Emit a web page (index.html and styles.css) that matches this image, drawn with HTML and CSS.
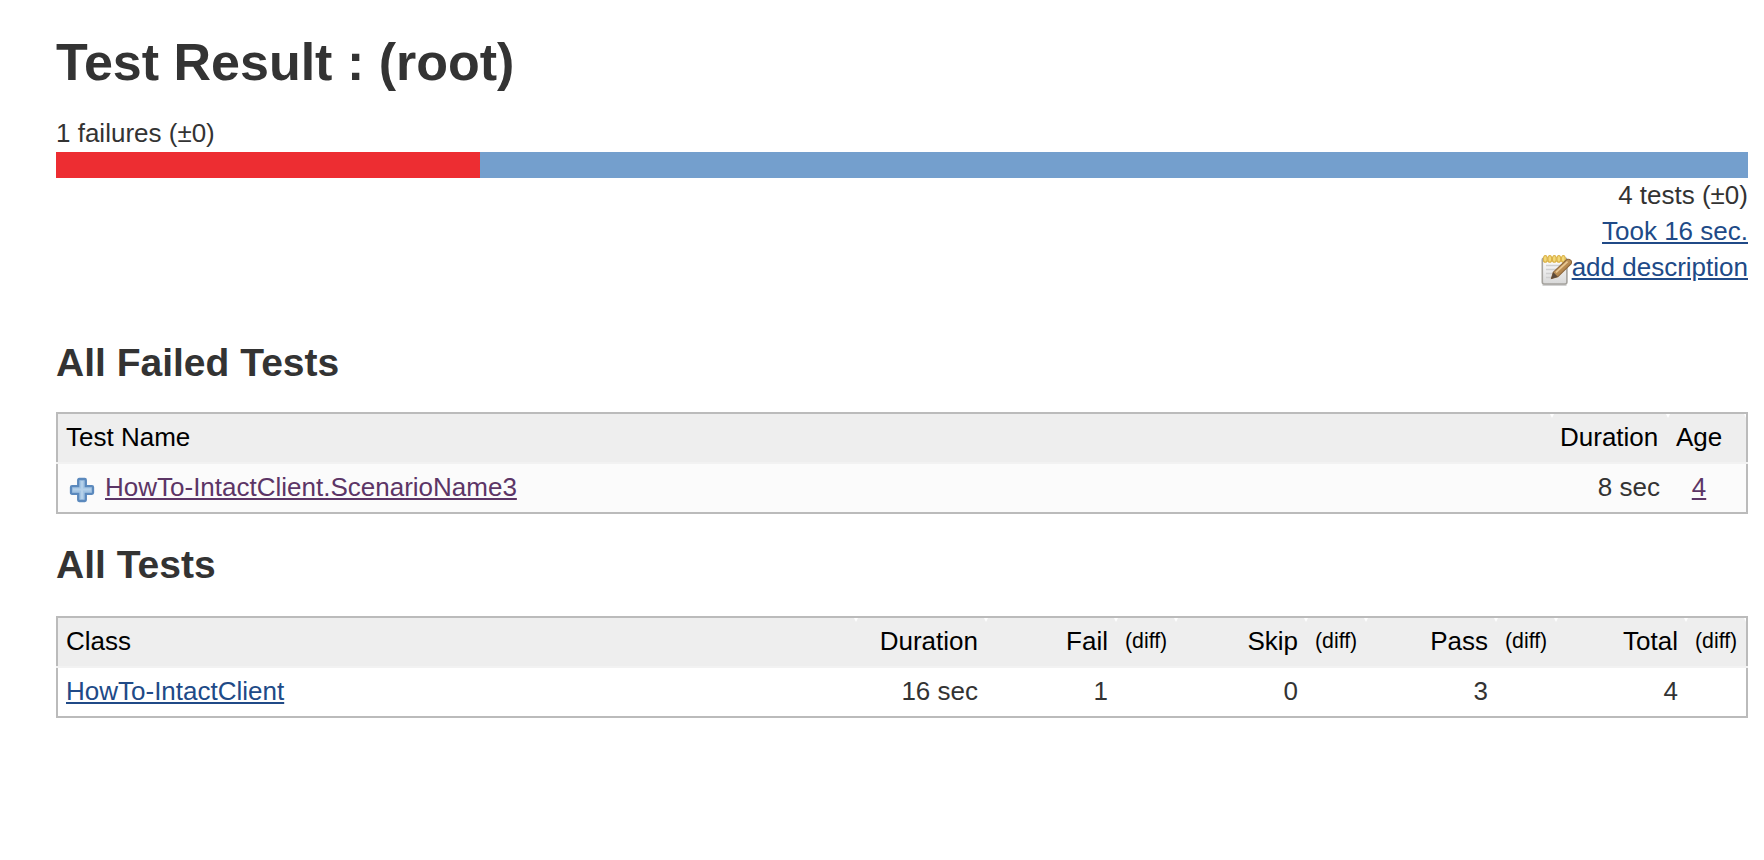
FILE: index.html
```html
<!DOCTYPE html>
<html lang="en">
<head>
<meta charset="utf-8">
<title>Test Result : (root)</title>
<link rel="stylesheet" href="styles.css">
</head>
<body>
<main class="page">
  <h1 class="title">Test Result : (root)</h1>
  <div class="failures">1 failures (±0)</div>
  <div class="bar"><div class="bar-failed"></div></div>
  <div class="summary">
    <div>4 tests (±0)</div>
    <div><a href="#">Took 16 sec.</a></div>
    <div class="describe">
      <svg class="notepad" viewBox="0 0 32 32" aria-hidden="true">
        <defs>
          <linearGradient id="paper" x1="0" y1="0" x2="0" y2="1"><stop offset="0" stop-color="#fff"/><stop offset="1" stop-color="#d8d8d8"/></linearGradient>
          <linearGradient id="wood" x1="0" y1="0" x2="1" y2="1"><stop offset="0" stop-color="#dcb478"/><stop offset="1" stop-color="#97662f"/></linearGradient>
        </defs>
        <path d="M2.5 31h24" stroke="#b5b5b5" stroke-width="1.2"/>
        <rect x="2.3" y="4" width="24.6" height="26" rx="2" fill="url(#paper)" stroke="#a5a39e" stroke-width="1.6"/>
        <path d="M6 11.5h16M6 15.5h13M6 19.5h9M6 23.5h6" stroke="#cfcfcf" stroke-width="1.3"/>
        <path d="M3 3.8h23v4.2H3z" fill="#ecd27a"/>
        <g fill="#f3d978" stroke="#dbb24a" stroke-width="1.1"><ellipse cx="5.3" cy="4.9" rx="1.9" ry="3.4"/><ellipse cx="9.8" cy="4.9" rx="1.9" ry="3.4"/><ellipse cx="14.3" cy="4.9" rx="1.9" ry="3.4"/><ellipse cx="18.8" cy="4.9" rx="1.9" ry="3.4"/><ellipse cx="23.3" cy="4.9" rx="1.9" ry="3.4"/></g>
        <path d="M11.5 24.5l1.8-6.3L26.5 5.8q2.2-1.2 4 .4t.5 3.7L17.8 22.8z" fill="url(#wood)" stroke="#8d673d" stroke-width="1.1"/>
        <path d="M11 25l2.3-6.8 4.5 4.6z" fill="#5d4b3b"/>
        <path d="M16 18.3L27.5 7.6" stroke="#e9c894" stroke-width="1.6"/>
      </svg><a href="#">add description</a>
    </div>
  </div>

  <h2 class="heading heading-failed">All Failed Tests</h2>
  <section class="grid">
    <div class="row row-head cols-failed">
      <div>Test Name</div><div class="num duration-head">Duration</div><div>Age</div>
    </div>
    <div class="row row-body shaded cols-failed">
      <div class="test">
        <svg class="plus" viewBox="0 0 26 26" aria-hidden="true">
          <path d="M10.2 2h5.6q1 0 1 1v6.2H23q1 0 1 1v5.6q0 1-1 1h-6.2V23q0 1-1 1h-5.6q-1 0-1-1v-6.2H3q-1 0-1-1v-5.6q0-1 1-1h6.2V3q0-1 1-1z" fill="#a3c4e3" stroke="#5b89bd" stroke-width="2.3"/>
          <path d="M13 4v18M4 12.5h18" stroke="#b4d0e9" stroke-width="2"/>
        </svg><a class="visited" href="#">HowTo-IntactClient.ScenarioName3</a>
      </div>
      <div class="num">8 sec</div><div class="age"><a class="visited" href="#">4</a></div>
    </div>
  </section>

  <h2 class="heading heading-all">All Tests</h2>
  <section class="grid">
    <div class="row row-head cols-all">
      <div>Class</div><div class="num">Duration</div>
      <div class="num">Fail</div><div class="diff">(diff)</div>
      <div class="num">Skip</div><div class="diff">(diff)</div>
      <div class="num">Pass</div><div class="diff">(diff)</div>
      <div class="num">Total</div><div class="diff">(diff)</div>
    </div>
    <div class="row row-body cols-all">
      <div><a href="#">HowTo-IntactClient</a></div><div class="num">16 sec</div>
      <div class="num">1</div><div></div>
      <div class="num">0</div><div></div>
      <div class="num">3</div><div></div>
      <div class="num">4</div><div></div>
    </div>
  </section>
</main>
</body>
</html>
```
FILE: styles.css
```css
* { box-sizing: border-box; }
body {
  margin: 0;
  background: #fff;
  color: #333;
  font: 26px/36px "Liberation Sans", Helvetica, Arial, sans-serif;
}
.page { padding: 32px 16px 0 56px; }
.title { margin: 0; font-size: 52px; line-height: 60px; }
.failures { margin-top: 23px; height: 37px; }
.bar { height: 26px; background: #749fcd; }
.bar-failed { width: 424px; height: 100%; background: #ed2d32; }
.summary { margin-top: -1px; text-align: right; }
a {
  color: #204a87;
  text-decoration-thickness: 2px;
  text-underline-offset: 2px;
}
a.visited { color: #5c3566; }
.describe { display: flex; justify-content: flex-end; }
.notepad { width: 32px; height: 32px; margin-top: 5px; }
.heading { margin: 0; font-size: 39px; line-height: 44px; }
.heading-failed { margin: 55px 0 27px; }
.heading-all { margin: 29px 0 29px; }
.grid { border: 2px solid #bbb; }
.row { display: grid; line-height: 46px; }
.row > div { padding: 0 8px; white-space: nowrap; }
.row-head {
  height: 50px;
  margin: 0 -2px;
  padding: 0 2px;
  border-bottom: 2px solid #f2f2f2;
  background: linear-gradient(#eee, #eee) 2px 0 / calc(100% - 4px) 100% no-repeat;
  color: #000;
}
.row-body { height: 48px; }
.shaded { background: #fbfbfb; }
.cols-failed { grid-template-columns: 1494px 116px 78px; }
.cols-all { grid-template-columns: 798px 130px 130px 60px 130px 60px 130px 60px 130px 60px; }
.row-head > div { position: relative; }
/* Small notch at the top of each column boundary */
.row-head > div::after {
  content: "";
  position: absolute;
  top: 0;
  right: -2px;
  border: 2px solid transparent;
  border-top: 4px solid #fff;
  border-bottom: 0;
}
.row-head > div:last-child::after { right: 0; border-right: 0; }
.row > .num { text-align: right; }
.row > .duration-head { padding-right: 10px; }
.row > .age { padding-right: 24px; text-align: center; }
.row > .diff { padding-left: 9px; font-size: 21.3px; }
.test { display: flex; }
.plus { width: 26px; height: 26px; margin: 13px 10px 0 3px; }
```
